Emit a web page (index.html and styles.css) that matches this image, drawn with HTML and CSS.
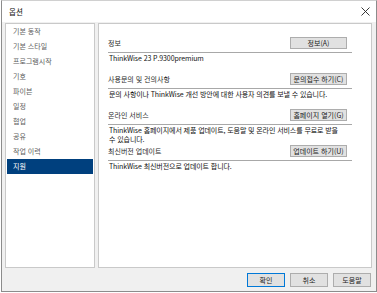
FILE: index.html
```html
<!DOCTYPE html>
<html lang="ko">
<head>
    <meta charset="UTF-8">
    <meta name="viewport" content="width=device-width, initial-scale=1.0">
    <link rel="stylesheet" href="styles.css">
    <title>옵션</title>
</head>
<body>
    <div class="dialog">
        <div class="titlebar">
            <span class="title">옵션</span>
            <svg class="close" width="9" height="9" viewBox="0 0 9 9">
                <path d="M0.5 0.5 L8.5 8.5 M8.5 0.5 L0.5 8.5" stroke="#222" stroke-width="0.9" fill="none"/>
            </svg>
        </div>

        <div class="content">
            <ul class="menu">
                <li>기본 동작</li>
                <li>기본 스타일</li>
                <li>프로그램시작</li>
                <li>기호</li>
                <li>파이븐</li>
                <li>일정</li>
                <li>협업</li>
                <li>공유</li>
                <li>작업 이력</li>
                <li class="selected">지원</li>
            </ul>

            <div class="panel">
                <div class="section">
                    <div class="row">
                        <span class="label">정보</span>
                        <button class="btn">정보(A)</button>
                    </div>
                    <div class="line"></div>
                    <div class="desc">ThinkWise 23 P.9300premium</div>
                </div>

                <div class="section">
                    <div class="row">
                        <span class="label">사용문의 및 건의사항</span>
                        <button class="btn">문의접수 하기(C)</button>
                    </div>
                    <div class="line"></div>
                    <div class="desc">문의 사항이나 ThinkWise 개선 방안에 대한 사용자 의견를 보낼 수 있습니다.</div>
                </div>

                <div class="section">
                    <div class="row">
                        <span class="label">온라인 서비스</span>
                        <button class="btn">홈페이지 열기(G)</button>
                    </div>
                    <div class="line"></div>
                    <div class="desc">ThinkWise 홈페이지에서 제품 업데이트, 도움말 및 온라인 서비스를 무료로 받을<br>수 있습니다.</div>
                </div>

                <div class="section">
                    <div class="row">
                        <span class="label">최신버전 업데이트</span>
                        <button class="btn">업데이트 하기(U)</button>
                    </div>
                    <div class="line"></div>
                    <div class="desc">ThinkWise 최신버전으로 업데이트 합니다.</div>
                </div>
            </div>
        </div>

        <div class="footer">
            <button class="btn btn-foot default">확인</button>
            <button class="btn btn-foot">취소</button>
            <button class="btn btn-foot">도움말</button>
        </div>
    </div>
</body>
</html>
```

FILE: styles.css
```css
body {
    margin: 0;
    background: #ffffff;
    font-family: "Noto Sans CJK KR", "Noto Sans", sans-serif;
    font-size: 7px;
    color: #222;
}

.dialog {
    margin-left: 1px;
    width: 374px;
    height: 290px;
    border: 1px solid #8c8c8c;
    border-top-color: #d0d0d0;
    background: #f0f0f0;
    display: flex;
    flex-direction: column;
}

.titlebar {
    height: 21px;
    background: #ffffff;
    display: flex;
    align-items: center;
    justify-content: space-between;
    padding: 0 6px 0 7px;
}

.title {
    font-size: 7.5px;
    color: #111;
}

.close {
    display: block;
}

.content {
    display: flex;
    gap: 3px;
    padding: 1px 4px 0 3px;
    height: 245px;
}

.menu {
    list-style: none;
    margin: 0;
    padding: 0;
    width: 88px;
    background: #ffffff;
    border: 1px solid #c9c9c9;
}

.menu li {
    height: 15px;
    line-height: 15px;
    padding-left: 6px;
    margin: 0 1px;
    color: #606060;
}

.menu li.selected {
    background: #00407e;
    color: #ffffff;
}

.panel {
    flex: 1;
    background: #ffffff;
    border: 1px solid #c9c9c9;
    padding: 13px 19px 0 9px;
}

.section {
    display: flex;
    flex-direction: column;
}

.row {
    height: 12px;
    display: flex;
    align-items: center;
    justify-content: space-between;
    padding-right: 5px;
}

.label {
    color: #2a2a2a;
}

.btn {
    font-family: inherit;
    font-size: 7px;
    color: #222;
    background: #e1e1e1;
    border: 1px solid #adadad;
    padding: 0;
    margin: 0;
    width: 57px;
    height: 12px;
    line-height: 10px;
}

.line {
    height: 1px;
    background: #a8a8a8;
    margin-top: 3px;
}

.desc {
    height: 19px;
    padding: 1px 0 0 1px;
    line-height: 9px;
    color: #111;
    letter-spacing: -0.1px;
    white-space: nowrap;
}

.footer {
    flex: 1;
    display: flex;
    justify-content: flex-end;
    align-items: center;
    gap: 5px;
    padding-right: 5px;
}

.btn-foot {
    width: 38px;
    height: 14px;
}

.btn-foot.default {
    border-color: #0078d7;
}
```
